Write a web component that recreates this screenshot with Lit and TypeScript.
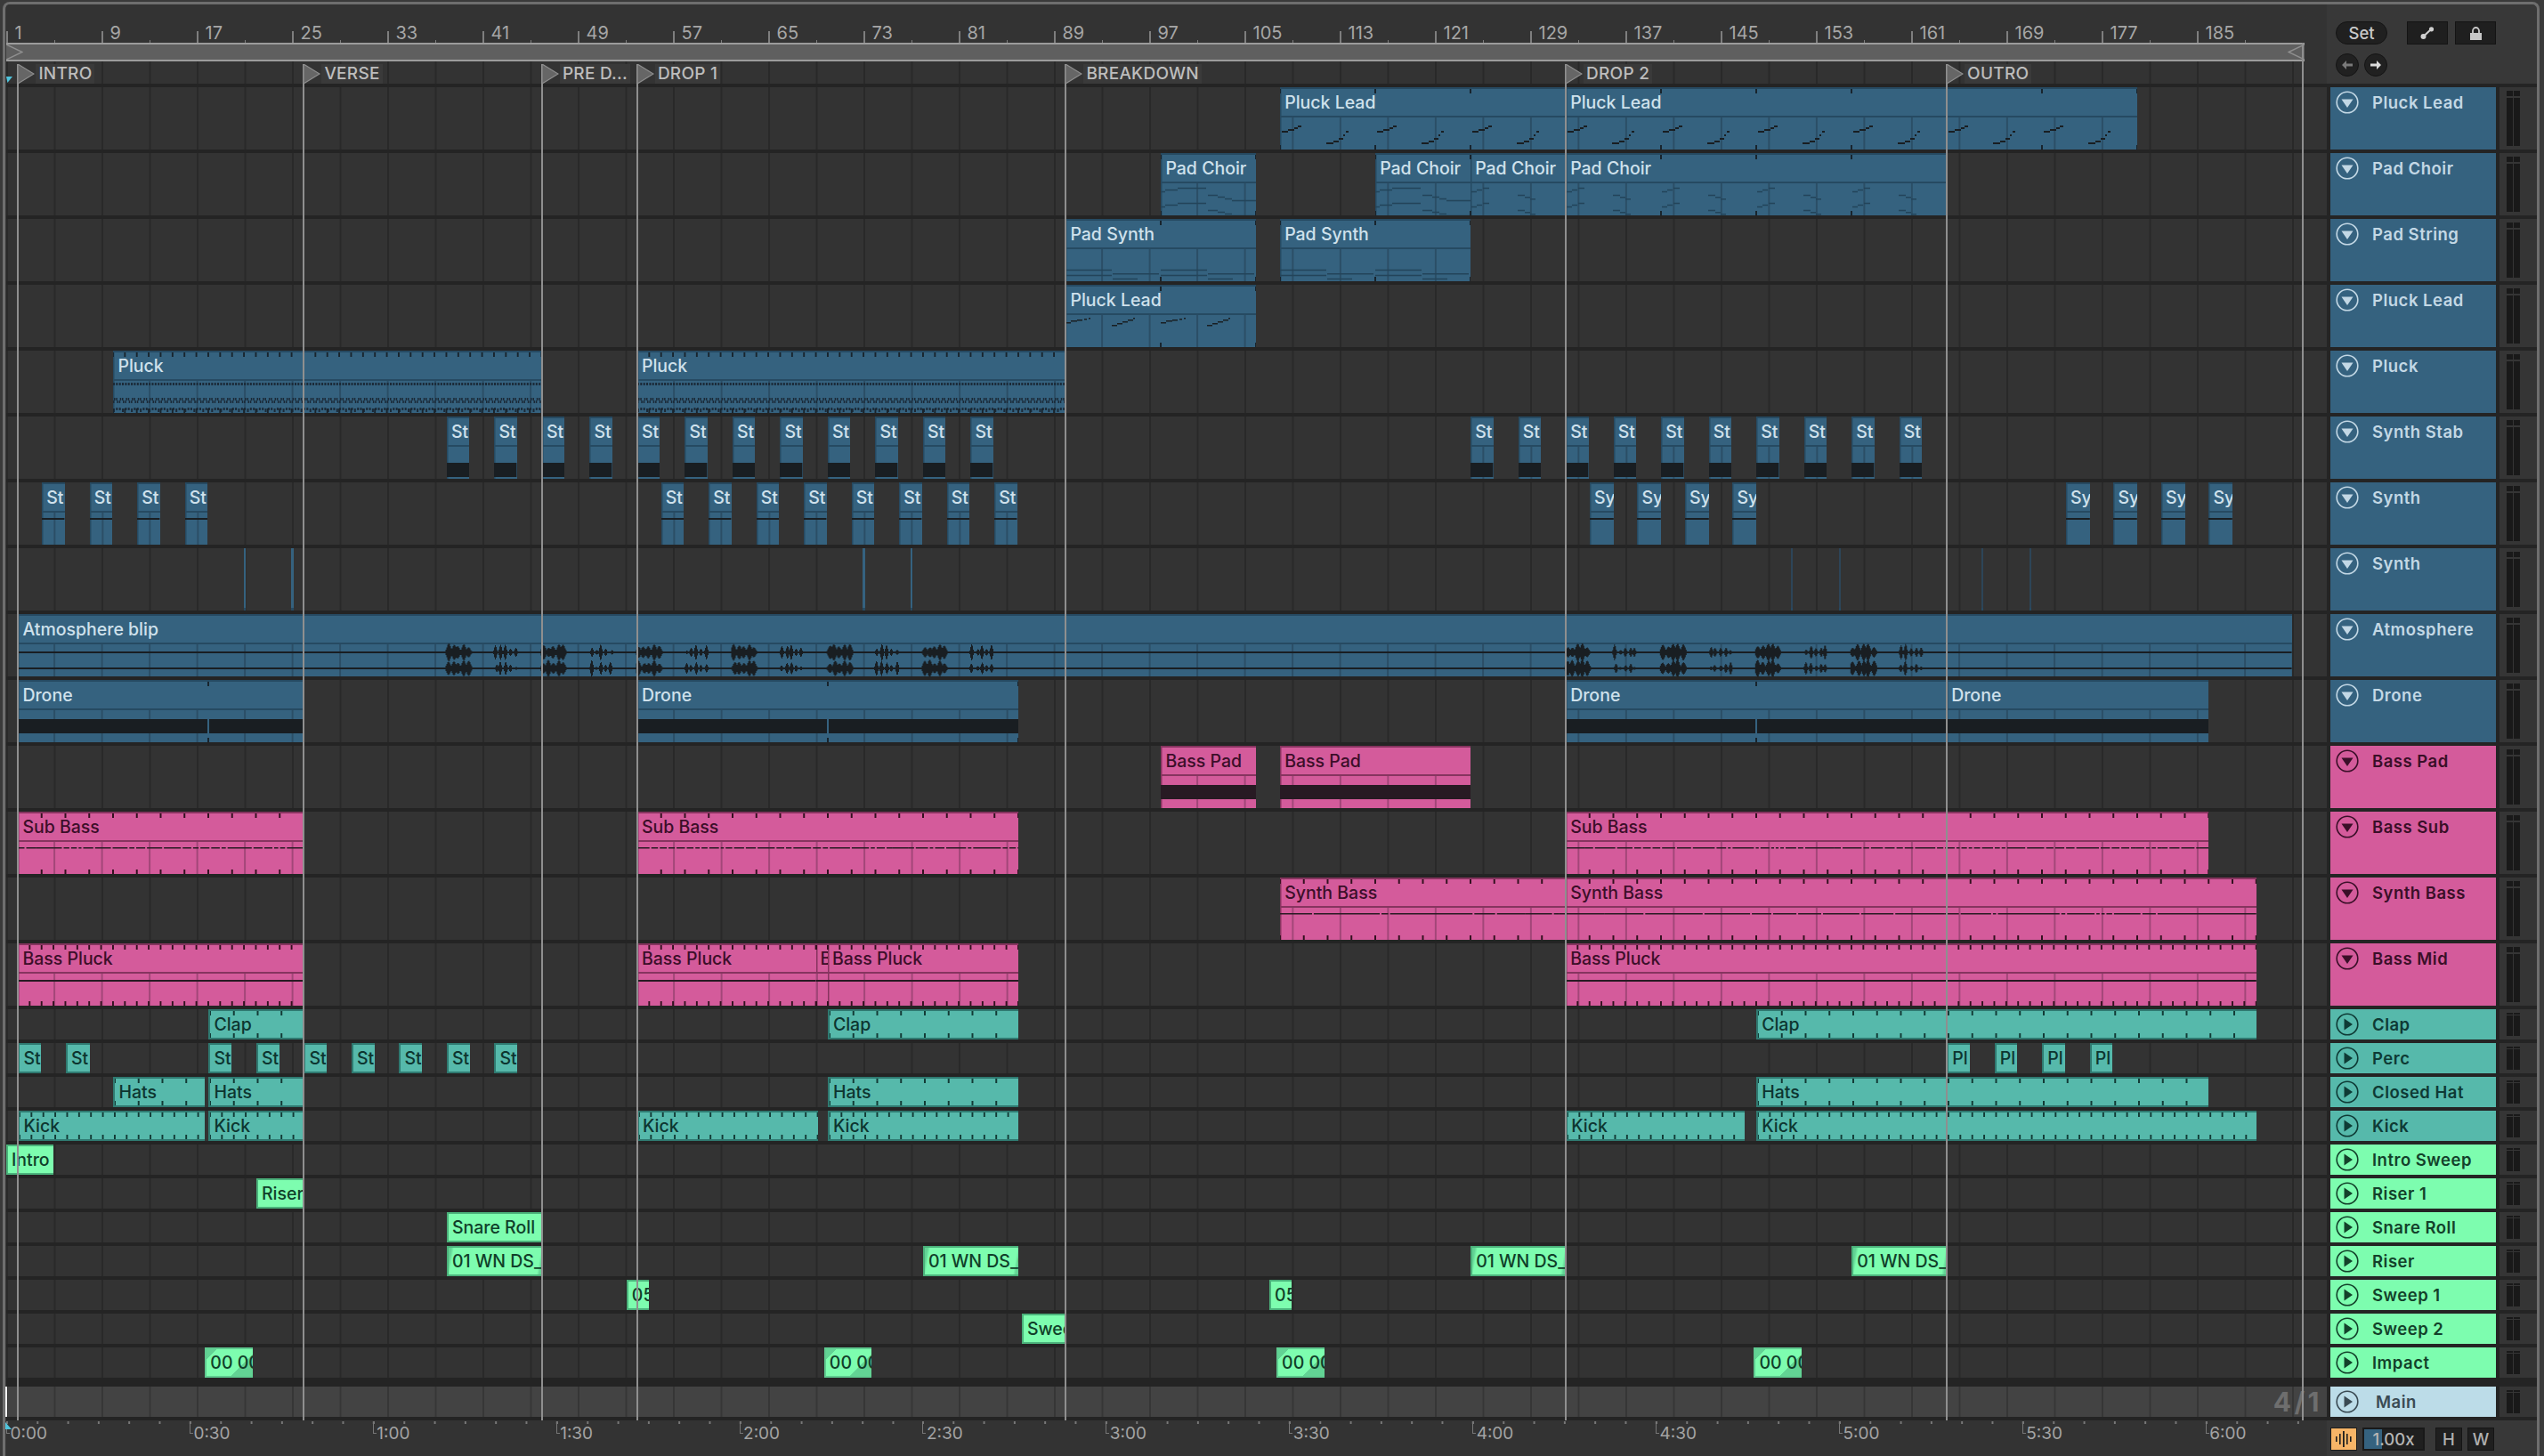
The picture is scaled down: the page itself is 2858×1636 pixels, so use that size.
import { LitElement, html, css, svg } from "lit";
import { customElement } from "lit/decorators.js";

const B = 13.375;
type Clip = { s: number; e: number; t: string; nt?: boolean };
type Row = { name: string; color: string; small?: boolean; kind?: string; tick?: number; clips: Clip[] };

const c = (s: number, e: number, t: string, nt = false): Clip => ({ s, e, t, nt });
const rep = (from: number, n: number, t: string, w = 1.9, step = 4): Clip[] =>
  Array.from({ length: n }, (_, i) => c(from + i * step, from + i * step + w, t));

const ROWS: Row[] = [
  { name: "Pluck Lead", color: "blue", kind: "lead", tick: 8, clips: [c(107, 131, "Pluck Lead"), c(131, 179, "Pluck Lead")] },
  { name: "Pad Choir", color: "blue", kind: "choir", tick: 8, clips: [c(97, 105, "Pad Choir"), c(115, 123, "Pad Choir"), c(123, 131, "Pad Choir"), c(131, 163, "Pad Choir")] },
  { name: "Pad String", color: "blue", kind: "pad", tick: 8, clips: [c(89, 105, "Pad Synth"), c(107, 123, "Pad Synth")] },
  { name: "Pluck Lead", color: "blue", kind: "lead2", tick: 8, clips: [c(89, 105, "Pluck Lead")] },
  { name: "Pluck", color: "blue", kind: "pluck", tick: 1, clips: [c(9, 45, "Pluck"), c(53, 89, "Pluck")] },
  { name: "Synth Stab", color: "blue", kind: "stab", clips: [...rep(37, 12, "St"), ...rep(123, 10, "St")] },
  { name: "Synth", color: "blue", kind: "syn", clips: [...rep(3, 4, "St"), ...rep(55, 8, "St"), ...rep(133, 4, "Sy", 2), ...rep(173, 4, "Sy", 2)] },
  { name: "Synth", color: "blue", kind: "thin", clips: [] },
  { name: "Atmosphere", color: "blue", kind: "wave", clips: [c(1, 192, "Atmosphere blip")] },
  { name: "Drone", color: "blue", kind: "band", tick: 16, clips: [c(1, 25, "Drone"), c(53, 85, "Drone"), c(131, 163, "Drone"), c(163, 185, "Drone", true)] },
  { name: "Bass Pad", color: "pink", kind: "band", clips: [c(97, 105, "Bass Pad"), c(107, 123, "Bass Pad")] },
  { name: "Bass Sub", color: "pink", kind: "dash", tick: 2, clips: [c(1, 25, "Sub Bass"), c(53, 85, "Sub Bass"), c(131, 185, "Sub Bass")] },
  { name: "Synth Bass", color: "pink", kind: "dash2", tick: 2, clips: [c(107, 131, "Synth Bass"), c(131, 189, "Synth Bass")] },
  { name: "Bass Mid", color: "pink", kind: "solid", tick: 1, clips: [c(1, 25, "Bass Pluck"), c(53, 68, "Bass Pluck"), c(68, 69, "Bass Pluck"), c(69, 85, "Bass Pluck"), c(131, 189, "Bass Pluck")] },
  { name: "Clap", color: "teal", small: true, tick: 2, clips: [c(17, 25, "Clap"), c(69, 85, "Clap"), c(147, 189, "Clap")] },
  { name: "Perc", color: "teal", small: true, clips: [c(1, 2.9, "St"), c(5, 7, "St"), ...rep(17, 7, "St", 1.95, 4), ...rep(163, 4, "Pl", 1.9)] },
  { name: "Closed Hat", color: "teal", small: true, tick: 2, clips: [c(9, 16.66, "Hats"), c(17, 25, "Hats"), c(69, 85, "Hats"), c(147, 185, "Hats")] },
  { name: "Kick", color: "teal", small: true, tick: 1, clips: [c(1, 16.66, "Kick"), c(17, 25, "Kick"), c(53, 68.2, "Kick"), c(69, 85, "Kick"), c(131, 146, "Kick"), c(147, 189, "Kick")] },
  { name: "Intro Sweep", color: "green", small: true, clips: [c(0, 3.95, "Intro")] },
  { name: "Riser 1", color: "green", small: true, clips: [c(21, 25, "Riser")] },
  { name: "Snare Roll", color: "green", small: true, clips: [c(37, 45, "Snare Roll")] },
  { name: "Riser", color: "green", small: true, kind: "fade2", clips: [c(37, 45, "01 WN DS_01"), c(77, 85, "01 WN DS_01"), c(123, 131, "01 WN DS_01"), c(155, 163, "01 WN DS_01")] },
  { name: "Sweep 1", color: "green", small: true, clips: [c(52.1, 54, "05 Sweep"), c(106.1, 108, "05 Sweep")] },
  { name: "Sweep 2", color: "green", small: true, clips: [c(85.3, 89, "Sweep 2")] },
  { name: "Impact", color: "green", small: true, kind: "fade", clips: [c(16.7, 20.7, "00 00 Impact"), c(68.7, 72.7, "00 00 Impact"), c(106.7, 110.7, "00 00 Impact"), c(146.8, 150.8, "00 00 Impact")] },
];

const LOCATORS: [number, string][] = [[1, "INTRO"], [25, "VERSE"], [45, "PRE D..."], [53, "DROP 1"], [89, "BREAKDOWN"], [131, "DROP 2"], [163, "OUTRO"]];
const BARS = Array.from({ length: 24 }, (_, i) => i * 8 + 1);
const TIMES = Array.from({ length: 13 }, (_, i) => `${Math.floor(i / 2)}:${i % 2 ? "30" : "00"}`);

function rng(seed: number) {
  let s = seed * 9301 + 49297;
  return () => ((s = (s * 9301 + 49297) % 233280) / 233280);
}
const rect = (x: number, y: number, w: number, h: number) => `M${x.toFixed(1)} ${y}h${w.toFixed(1)}v${h}h${(-w).toFixed(1)}z`;

function leadPath(w: number) {
  let d = "";
  for (let p = 0; p < w; p += B * 8) {
    const a = [[2, 7, 49], [9, 7, 47], [16, 4, 45], [20, 4, 43], [52, 8, 62], [60, 6, 60], [66, 5, 57], [71, 2, 53], [74, 3, 49]];
    for (const [x, wd, y] of a) if (p + x < w) d += rect(p + x, y, wd, 2);
  }
  return d;
}
function lead2Path(w: number) {
  let d = "";
  for (let p = 0; p < w; p += B * 8) {
    const a = [[0, 6, 42], [6, 7, 40], [13, 6, 39], [21, 3, 38], [26, 2, 37], [52, 6, 45], [58, 6, 43], [64, 6, 41], [70, 6, 39], [76, 2, 37]];
    for (const [x, wd, y] of a) if (p + x < w) d += rect(p + x, y, wd, 1.5);
  }
  return d;
}
function choirPath(w: number, long: boolean) {
  let d = "";
  for (let p = 0; p < w; p += B * 8) {
    for (const o of [0, 17]) {
      if (long) {
        d += rect(p, 42.7 + o, 5, 1.5) + rect(p + 5, 40.7 + o, 14, 1.5) + rect(p + 19, 38.7 + o, 32, 1.5);
        d += rect(p + 53, 46.7 + o, 11, 1.5) + rect(p + 64, 48.7 + o, 8, 1.5) + rect(p + 72, 50.7 + o, 8, 1.5) + rect(p + 80, 52.7 + o, 27, 1.5);
      } else {
        d += rect(p + 1, 42.7 + o, 6, 1.5) + rect(p + 7, 40.7 + o, 6, 1.5) + rect(p + 14, 38.7 + o, 7, 1.5);
        d += rect(p + 53, 46.7 + o, 8, 1.5) + rect(p + 61, 49 + o, 6, 1.5) + rect(p + 67, 51 + o, 6, 1.5);
      }
    }
  }
  return d;
}
function padPath(w: number) {
  let d = "";
  for (let p = 0; p < w; p += B * 8) {
    d += rect(p, 56.7, 52, 1.6) + rect(p, 62.7, 52, 1.6) + rect(p + 53, 61, 52, 1.6) + rect(p + 53, 66.7, 28, 1.6);
  }
  return d;
}
function pluckPath(w: number) {
  let d = "";
  const s = B / 4;
  for (let x = 0; x < w - 2; x += s) {
    d += rect(x, 36, 2, 3);
    const i = Math.round(x / s);
    d += rect(x, i % 2 ? 53 : 56, 1.5, 3) + rect(x + 1, i % 2 ? 56 : 53, 1.5, 3);
    d += rect(x, i % 3 ? 64 : 65, 2, i % 3 ? 3 : 4);
  }
  return d;
}
function wavePath(w: number, start: number) {
  let d = rect(0, 42, w, 2) + rect(0, 60, w, 2);
  const bursts: number[] = [];
  for (let b = 37; b <= 81; b += 4) bursts.push(b);
  for (let b = 131; b <= 159; b += 4) bursts.push(b);
  bursts.forEach((b, i) => {
    const ox = (b - start) * B - 1;
    for (const [cy, ch] of [[43, 0], [61, 1]]) {
      const r = rng(b * 7 + ch + 3);
      const dense = i % 2 === 0;
      const blobs = 5;
      const centres = Array.from({ length: blobs }, (_, k) => ((k + 0.5) / blobs) * 28 + (r() - 0.5) * 2);
      const sizes = centres.map(() => (dense ? 5 + r() * 5 : 1.5 + r() * 8));
      for (let x = 0; x < 30; x += 1) {
        let a = 0;
        centres.forEach((cx, k) => {
          const t = (x - cx) / (dense ? 3 : 1.8);
          a = Math.max(a, sizes[k] * Math.exp(-t * t));
        });
        if (a > 1) {
          const h = Math.round(a * 2) / 2;
          d += rect(ox + x, cy - h, 1, h * 2);
        }
      }
    }
  });
  return d;
}
function bandPath(w: number, tick: number | undefined) {
  if (tick && tick * B < w) {
    const n = tick * B;
    return rect(0, 44, n - 1, 16) + rect(n + 1, 44, w - n, 16);
  }
  return rect(0, 44, w, 16);
}
function dashPath(w: number, y: number, s: number, gapRate: number) {
  const r = rng(s);
  let d = "";
  let x = 0;
  while (x < w) {
    const len = 3 + r() * (1 / gapRate);
    d += rect(x, y, Math.min(len, w - x), 1.5);
    x += len + (r() < 0.6 ? 2 : 0);
  }
  return d;
}

function clipArt(kind: string | undefined, cl: Clip, w: number, tick?: number) {
  let d = "";
  let cls = "n";
  switch (kind) {
    case "lead": d = leadPath(w); break;
    case "lead2": d = lead2Path(w); break;
    case "choir": d = choirPath(w, cl.s < 120); cls = "dim"; break;
    case "pad": d = padPath(w); cls = "dim"; break;
    case "pluck": d = pluckPath(w); cls = "pl"; break;
    case "wave": d = wavePath(w, cl.s); break;
    case "band": d = bandPath(w, cl.nt ? undefined : tick); break;
    case "stab": d = rect(0, 52, w, 16); break;
    case "syn": d = rect(0, 40, w, 2); break;
    case "dash": d = dashPath(w, 40, cl.s, 0.12); break;
    case "dash2": d = dashPath(w, 40, cl.s, 0.03); break;
    case "solid": d = rect(0, 41, w, 2); break;
  }
  if (!d) return null;
  return svg`<svg class="art ${cls}" width=${w} height="70"><path d=${d}></path></svg>`;
}

const icon = {
  down: svg`<circle cx="13" cy="13" r="11.8" fill="none" stroke="currentColor" stroke-width="1.6"/><path d="M6.5 9.5h13L13 19z" fill="currentColor"/>`,
  right: svg`<circle cx="13" cy="13" r="11.8" fill="none" stroke="currentColor" stroke-width="1.6"/><path d="M9.5 6.5L19 13l-9.5 6.5z" fill="currentColor"/>`,
};

@customElement("app-root")
export class AppRoot extends LitElement {
  static styles = css`
    :host { display: block; width: 2858px; height: 1636px; background: #3a3a3a; overflow: hidden; font-family: Inter, "Liberation Sans", sans-serif; position: relative; }
    .frame { box-sizing: border-box; margin: 2px 0 0 3px; width: 2850px; height: 1634px; border: 3px solid #6e6e6e; border-bottom: none; border-radius: 8px 8px 0 0; background: #383838; overflow: hidden; }
    .inner { position: relative; padding-left: 1px; height: 100%; }
    .top { display: grid; grid-template-columns: 2607px 1fr; height: 89px; }
    .head { display: flex; flex-direction: column; background: #333; }
    .ruler { display: flex; height: 43px; overflow: hidden; }
    .bar { flex: 0 0 107px; position: relative; box-sizing: border-box; padding: 23px 0 0 9.5px; font-size: 20px; line-height: 18px; color: #a6a6a6; font-weight: 400; }
    .bar::before { content: ""; position: absolute; left: 0; bottom: 0; width: 1.5px; height: 13px; background: #7e7e7e; }
    .bar::after { content: ""; position: absolute; left: 53.5px; bottom: 0; width: 1.5px; height: 3px; background: #7e7e7e; }
    .brace { height: 21px; width: 2582px; box-sizing: border-box; background: #5f5f5f; border-top: 2px solid #9c9c9c; border-bottom: 2px solid #9c9c9c; display: flex; justify-content: space-between; }
    .brace svg { height: 17px; width: 19px; display: block; }
    .locs { height: 25px; }
    .lane { background-color: #333; background-image: linear-gradient(90deg, #292929 2px, transparent 2px); background-size: 53.5px 100%; position: relative; overflow: hidden; }
    .panel { padding: 19px 0 0 10px; position: relative; }
    .panel-row { display: flex; align-items: center; }
    .set { box-sizing: border-box; width: 58px; height: 26px; border-radius: 13px; background: #202020; border: 1.5px solid #141414; color: #c8c8c8; font-size: 18.5px; font-weight: 500; display: flex; align-items: center; justify-content: center; }
    .sq { box-sizing: border-box; width: 46px; height: 26px; background: #1f1f1f; border: 1.5px solid #141414; display: flex; align-items: center; justify-content: center; margin-left: 8px; }
    .sq.first { margin-left: 22px; }
    .nav { box-sizing: border-box; width: 26px; height: 26px; border-radius: 50%; background: #212121; border: 1.5px solid #141414; display: flex; align-items: center; justify-content: center; margin-right: 6px; }
    .nav-row { margin-top: 10px; }
    .rows { display: flex; flex-direction: column; gap: 4px; padding: 4px 0; background: #242424; }
    .row { display: grid; grid-template-columns: 2607px 4px 186px 4px 42px; height: 70px; }
    .row.small { height: 34px; }
    .row.main { margin-top: 6px; }
    .row.main .lane { background-color: #434343; background-image: linear-gradient(90deg, #363636 2px, transparent 2px); }
    .meter-cell { background: #353535; display: flex; gap: 1px; padding: 4px 0 4px 8px; box-sizing: border-box; }
    .m { width: 7px; display: flex; flex-direction: column; gap: 2px; }
    .m i { display: block; background: #191919; }
    .m i:first-child { height: 6px; }
    .m i:last-child { flex: 1; }
    .row.small .m { gap: 1px; }
    .row.small .m i:first-child { height: 2px; }
    .hdr { display: flex; align-items: flex-start; padding: 4px 0 0 6px; font-size: 18.5px; line-height: 26px; font-weight: 600; letter-spacing: 0.5px; white-space: nowrap; box-sizing: border-box; }
    .hdr svg { width: 26px; height: 26px; flex: none; margin-right: 15px; }
    .hdr.main svg { margin-right: 19px; }
    .blue { --c: #35627f; --d: #264a62; --t: #cfe1ec; --n: #191e22; --g: #2b4e66; --h: #c3d8e5; --k: #18242d; }
    .pink { --c: #d45b9b; --d: #86345f; --t: #3c0e29; --n: #281a23; --g: #a24678; --h: #3a0f28; --k: #33101f; }
    .teal { --c: #56b9ab; --d: #2f7a71; --t: #0d3530; --n: #1c2a28; --g: #46998d; --h: #0e3a35; --k: #123a35; }
    .green { --c: #7dfdaf; --d: #4bb27b; --t: #103f29; --n: #1c2a28; --g: #6ad998; --h: #13412a; --k: #123a35; }
    .mainc { --c: #bcdce8; --h: #3a4a53; }
    .hdr { background: var(--c); color: var(--h); }
    .clip { position: absolute; top: 0; bottom: 0; background: var(--c); overflow: hidden; color: var(--t); display: flex; flex-direction: column; box-shadow: inset 1.5px 0 var(--d); }
    .title { box-sizing: border-box; height: 32px; flex: none; border-top: 2px solid var(--d); padding: 0 0 0 5px; font-size: 19.5px; line-height: 30px; font-weight: 500; white-space: nowrap; overflow: hidden; }
    .body { flex: 1; border-top: 2px solid var(--d); background-image: linear-gradient(90deg, var(--g) 2px, transparent 2px); background-size: 53.5px 100%; }
    .clip.small { box-sizing: border-box; border: 2px solid var(--d); border-right: none; box-shadow: none; }
    .clip.small .title { border-top: none; height: 30px; padding-left: 4px; line-height: 30px; }
    .clip.small .body { display: none; }
    .clip.fade { background: linear-gradient(135deg, #62d394 0 14%, var(--c) 14.5% 70%, #62d394 70.5%); border-color: #5fcb90; }
    .clip.fade2 { background: linear-gradient(100deg, #62d394 0 3px, var(--c) 6px calc(100% - 6px), #62d394 calc(100% - 3px)); }
    .art { position: absolute; left: 0; top: 0; pointer-events: none; }
    .art path { fill: var(--n); }
    .art.dim path { fill: #23445a; }
    .art.pl path { fill: #1b2a38; }
    .ticks::before, .ticks::after { content: ""; position: absolute; left: 0; right: 0; height: 5px; background-image: linear-gradient(90deg, var(--k) 2px, transparent 2px); background-size: var(--p) 100%; background-position-x: calc(var(--p) - 1px); z-index: 2; }
    .ticks::before { top: 2px; }
    .ticks::after { bottom: 0; }
    .clip.small.ticks::before { top: 0; }
    .no-tick::before, .no-tick::after { display: none; }
    .thin { position: absolute; top: 0; bottom: 0; width: 2.5px; background: #35627f; box-shadow: inset 0 -3px #264a62; }
    .thin.faint { background: #2d4558; width: 2px; }
    .bottom { display: grid; grid-template-columns: 2607px 1fr; height: 40px; }
    .time { display: flex; overflow: hidden; background: #333; }
    .t { flex: 0 0 205.9px; position: relative; box-sizing: border-box; padding: 1px 0 0 4.5px; height: 40px; font-size: 19px; line-height: 28px; color: #a3a3a3; background-image: linear-gradient(90deg, #777 1.5px, transparent 1.5px); background-size: 34.3px 3px; background-repeat: repeat-x; background-position: 0 1px; }
    .t::before { content: ""; position: absolute; left: 0; top: 1px; height: 13px; width: 3px; border-left: 1.5px solid #777; border-bottom: 1.5px solid #777; }
    .ctl { display: flex; padding: 8px 0 0 4px; align-items: flex-start; }
    .orange { box-sizing: border-box; width: 30px; height: 26px; background: #f7b567; border: 1.5px solid #1c1c1c; display: flex; align-items: center; justify-content: center; }
    .zoomv { box-sizing: border-box; position: relative; width: 70px; height: 26px; background: #1f1f1f; border: 2px solid #191919; margin-left: 6px; color: #b5b5b5; font-size: 18.5px; font-weight: 500; display: flex; align-items: center; justify-content: center; overflow: hidden; }
    .zoomv b { position: absolute; left: 0; top: 0; bottom: 0; width: 20px; background: #35627f; }
    .zoomv span { position: relative; }
    .hw { box-sizing: border-box; width: 30px; height: 26px; background: #1f1f1f; border: 1.5px solid #151515; color: #b0b0b0; font-size: 18.5px; font-weight: 500; display: flex; align-items: center; justify-content: center; margin-left: 6px; }
    .hw.h { margin-left: 12px; }
    .line { position: absolute; top: 67px; height: 1524px; width: 2px; background: #8f8f8f; z-index: 5; pointer-events: none; }
    .line.end { top: 43px; height: 1548px; }
    .loc { position: absolute; top: 67px; height: 22px; display: flex; align-items: center; z-index: 6; color: #bdbdbd; font-size: 19px; font-weight: 500; white-space: nowrap; letter-spacing: 0.25px; }
    .loc svg { width: 20px; height: 22px; flex: none; }
    .loc span { margin-left: 1px; padding: 0 3px; background: #3a3a3a; line-height: 22px; }
    .marker { position: absolute; left: 0; top: 1553px; width: 2px; height: 34px; background: #f2f2f2; z-index: 6; }
    .cy { position: absolute; background: #4fc4dc; z-index: 7; width: 7px; height: 7px; }
    .cy.a { left: 1px; top: 81px; clip-path: polygon(0 0, 100% 0, 20% 100%); }
    .cy.b { left: 0; top: 1593px; height: 8px; clip-path: polygon(0 0, 100% 100%, 0 100%); }
    .sig { position: absolute; right: 241px; top: 1555px; font-size: 30px; line-height: 30px; font-weight: 700; letter-spacing: 3.5px; color: #6e6e6e; z-index: 4; }
  `;

  private renderClip(r: Row, cl: Clip) {
    const w = (cl.e - cl.s) * B;
    const left = cl.s * B;
    const off = (((4 - (cl.s % 4)) % 4) * B).toFixed(2);
    const kindCls = r.kind === "fade" || r.kind === "fade2" ? r.kind : "";
    const classes = `clip ${r.color} ${r.small ? "small" : ""} ${r.tick ? "ticks" : ""} ${kindCls} ${cl.nt ? "no-tick" : ""}`;
    const p = r.tick ? `--p:${(r.tick * B).toFixed(3)}px;` : "";
    return html`<div class=${classes} style="left:${left.toFixed(2)}px;width:${w.toFixed(2)}px;${p}">
      <div class="title">${cl.t}</div>
      <div class="body" style="background-position-x:${off}px"></div>
      ${r.small ? null : clipArt(r.kind, cl, w, r.tick)}
    </div>`;
  }

  private renderRow(r: Row) {
    return html`<div class="row ${r.small ? "small" : ""}">
      <div class="lane">
        ${r.clips.map((cl) => this.renderClip(r, cl))}
        ${r.kind === "thin"
          ? html`${[20, 24, 72, 76].map((b) => html`<div class="thin" style="left:${(b * B - 1).toFixed(1)}px"></div>`)}
              ${[150, 154, 166, 170].map((b) => html`<div class="thin faint" style="left:${(b * B - 1).toFixed(1)}px"></div>`)}`
          : null}
      </div>
      <div></div>
      <div class="hdr ${r.color}">
        <svg viewBox="0 0 26 26">${r.color === "blue" || r.color === "pink" ? icon.down : icon.right}</svg>${r.name}
      </div>
      <div></div>
      ${this.meter()}
    </div>`;
  }

  private meter() {
    return html`<div class="meter-cell">
      <div class="m"><i></i><i></i></div>
      <div class="m"><i></i><i></i></div>
    </div>`;
  }

  render() {
    return html`<div class="frame"><div class="inner">
      <div class="top">
        <div class="head">
          <div class="ruler">${BARS.map((b) => html`<div class="bar">${b}</div>`)}</div>
          <div class="brace">
            <svg viewBox="0 0 19 17"><path d="M0 0L18 8.5L0 17" fill="none" stroke="#8f8f8f" stroke-width="1.5"/></svg>
            <svg viewBox="0 0 19 17"><path d="M19 0L1 8.5L19 17" fill="none" stroke="#8f8f8f" stroke-width="1.5"/></svg>
          </div>
          <div class="locs lane"></div>
        </div>
        <div class="panel">
          <div class="panel-row">
            <div class="set">Set</div>
            <div class="sq first"><svg width="16" height="14" viewBox="0 0 16 14"><path d="M3.5 11L12 3" stroke="#d0d0d0" stroke-width="2"/><circle cx="3.5" cy="11" r="3" fill="#d0d0d0"/><circle cx="12.5" cy="2.8" r="2.6" fill="#d0d0d0"/></svg></div>
            <div class="sq"><svg width="15" height="15" viewBox="0 0 15 15"><path d="M4 7V4.5a3.5 3.5 0 0 1 7 0V7" fill="none" stroke="#c6c6c6" stroke-width="1.8"/><rect x="1" y="7" width="13" height="8" fill="#c6c6c6"/></svg></div>
          </div>
          <div class="panel-row nav-row">
            <div class="nav"><svg width="14" height="12" viewBox="0 0 14 12"><path d="M6 1L1 6l5 5V7.5h7v-3H6z" fill="#7a7a7a"/></svg></div>
            <div class="nav"><svg width="14" height="12" viewBox="0 0 14 12"><path d="M8 1l5 5-5 5V7.5H1v-3h7z" fill="#dcdcdc"/></svg></div>
          </div>
        </div>
      </div>
      <div class="rows">
        ${ROWS.map((r) => this.renderRow(r))}
        <div class="row small main">
          <div class="lane"></div>
          <div></div>
          <div class="hdr mainc main"><svg viewBox="0 0 26 26">${icon.right}</svg>Main</div>
          <div></div>
          ${this.meter()}
        </div>
      </div>
      <div class="bottom">
        <div class="time">${TIMES.map((t) => html`<div class="t">${t}</div>`)}</div>
        <div class="ctl">
          <div class="orange"><svg width="20" height="18" viewBox="0 0 20 18"><path d="M1 6h1.6v6H1zM5 3h1.6v12H5zM9 0h1.8v18H9zM13 3h1.6v12H13zM17 6h1.6v6H17z" fill="#1f1f1f"/></svg></div>
          <div class="zoomv"><b></b><span>1.00x</span></div>
          <div class="hw h">H</div>
          <div class="hw">W</div>
        </div>
      </div>
      ${LOCATORS.map(([b, name]) => {
        const x = b * B;
        return html`<div class="line" style="left:${x.toFixed(1)}px"></div>
          <div class="loc" style="left:${x.toFixed(1)}px">
            <svg viewBox="0 0 20 22"><path d="M1 0L19 11L1 22z" fill="#666" stroke="#8f8f8f" stroke-width="1.2"/></svg><span>${name}</span>
          </div>`;
      })}
      <div class="line end" style="left:${(193 * B - 1).toFixed(1)}px"></div>
      <div class="marker"></div>
      <div class="cy a"></div>
      <div class="cy b"></div>
      <div class="sig">4/1</div>
    </div></div>`;
  }
}
